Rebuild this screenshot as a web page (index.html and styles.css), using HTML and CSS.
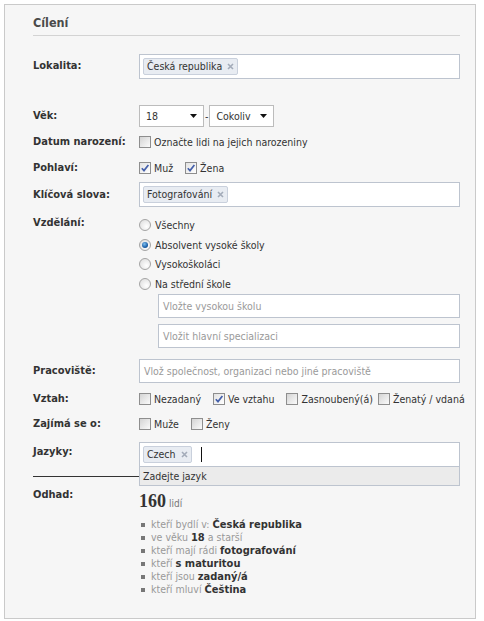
FILE: index.html
```html
<!DOCTYPE html>
<html lang="cs">
<head>
<meta charset="utf-8">
<title>Cílení</title>
<link rel="stylesheet" href="styles.css">
</head>
<body>
<div class="panel">
  <h2 class="title">Cílení</h2>

  <div class="row row-location">
    <div class="label">Lokalita:</div>
    <div class="field">
      <div class="tokenbox">
        <span class="token">Česká republika<svg class="token-x" width="7" height="7" viewBox="0 0 7 7"><path d="M1 1L6 6M6 1L1 6" stroke="#a3abb9" stroke-width="1.6"/></svg></span>
      </div>
    </div>
  </div>

  <div class="row row-age">
    <div class="label">Věk:</div>
    <div class="field age">
      <div class="select"><span>18</span><svg width="7" height="4" viewBox="0 0 7 4"><path d="M0 0H7L3.5 4Z" fill="#111"/></svg></div>
      <span class="dash">-</span>
      <div class="select"><span>Cokoliv</span><svg width="7" height="4" viewBox="0 0 7 4"><path d="M0 0H7L3.5 4Z" fill="#111"/></svg></div>
    </div>
  </div>

  <div class="row row-birthday">
    <div class="label">Datum narození:</div>
    <div class="field checks">
      <label class="check"><span class="box"></span>Označte lidi na jejich narozeniny</label>
    </div>
  </div>

  <div class="row row-gender">
    <div class="label">Pohlaví:</div>
    <div class="field checks">
      <label class="check"><span class="box is-checked"><svg width="10" height="10" viewBox="0 0 10 10"><path d="M1.8 5.2L4 7.6L8.4 2" fill="none" stroke="#4560aa" stroke-width="1.7"/></svg></span>Muž</label>
      <label class="check"><span class="box is-checked"><svg width="10" height="10" viewBox="0 0 10 10"><path d="M1.8 5.2L4 7.6L8.4 2" fill="none" stroke="#4560aa" stroke-width="1.7"/></svg></span>Žena</label>
    </div>
  </div>

  <div class="row row-keywords">
    <div class="label">Klíčová slova:</div>
    <div class="field">
      <div class="tokenbox">
        <span class="token">Fotografování<svg class="token-x" width="7" height="7" viewBox="0 0 7 7"><path d="M1 1L6 6M6 1L1 6" stroke="#a3abb9" stroke-width="1.6"/></svg></span>
      </div>
    </div>
  </div>

  <div class="row row-education">
    <div class="label">Vzdělání:</div>
    <div class="field">
      <div class="radios">
        <label class="radio"><span class="dot"></span>Všechny</label>
        <label class="radio"><span class="dot is-selected"></span>Absolvent vysoké školy</label>
        <label class="radio"><span class="dot"></span>Vysokoškoláci</label>
        <label class="radio"><span class="dot"></span>Na střední škole</label>
      </div>
      <div class="subinputs">
        <div class="input">Vložte vysokou školu</div>
        <div class="input">Vložit hlavní specializaci</div>
      </div>
    </div>
  </div>

  <div class="row row-work">
    <div class="label">Pracoviště:</div>
    <div class="field">
      <div class="input">Vlož společnost, organizaci nebo jiné pracoviště</div>
    </div>
  </div>

  <div class="row row-relation">
    <div class="label">Vztah:</div>
    <div class="field checks">
      <label class="check"><span class="box"></span>Nezadaný</label>
      <label class="check"><span class="box is-checked"><svg width="10" height="10" viewBox="0 0 10 10"><path d="M1.8 5.2L4 7.6L8.4 2" fill="none" stroke="#4560aa" stroke-width="1.7"/></svg></span>Ve vztahu</label>
      <label class="check check-tight"><span class="box"></span>Zasnoubený(á)</label>
      <label class="check"><span class="box"></span>Ženatý / vdaná</label>
    </div>
  </div>

  <div class="row row-interest">
    <div class="label">Zajímá se o:</div>
    <div class="field checks">
      <label class="check"><span class="box"></span>Muže</label>
      <label class="check"><span class="box"></span>Ženy</label>
    </div>
  </div>

  <div class="row row-languages">
    <div class="label">Jazyky:</div>
    <div class="field lang">
      <div class="tokenbox">
        <span class="token">Czech<svg class="token-x" width="7" height="7" viewBox="0 0 7 7"><path d="M1 1L6 6M6 1L1 6" stroke="#a3abb9" stroke-width="1.6"/></svg></span>
        <span class="caret"></span>
      </div>
      <div class="suggest">Zadejte jazyk</div>
    </div>
  </div>

  <div class="estimate">
    <div class="label">Odhad:</div>
    <div class="field">
      <div class="count"><span class="count-num">160</span><span class="count-unit">lidí</span></div>
      <ul class="reach">
        <li>kteří bydlí v: <b>Česká republika</b></li>
        <li>ve věku <b>18</b> a starší</li>
        <li>kteří mají rádi <b>fotografování</b></li>
        <li>kteří <b>s maturitou</b></li>
        <li>kteří jsou <b>zadaný/á</b></li>
        <li>kteří mluví <b>Čeština</b></li>
      </ul>
    </div>
  </div>
</div>
</body>
</html>
```

FILE: styles.css
```css
* { box-sizing: border-box; }

body {
  margin: 0;
  background: #fff;
  font-family: "DejaVu Sans Condensed", "DejaVu Sans", sans-serif;
  font-stretch: condensed;
  font-size: 10.5px;
  line-height: 14px;
  color: #333;
}

.panel {
  margin: 4px 0 0 4px;
  width: 472px;
  border: 1px solid #cacaca;
  background: #f6f6f6;
  padding: 10px 15px 22px 28px;
}

.title {
  margin: 0;
  font-size: 12.5px;
  font-weight: bold;
  line-height: 16px;
  color: #4a4a4a;
  padding-bottom: 4px;
  border-bottom: 1px solid #d3d3d3;
}

.row,
.estimate {
  display: grid;
  grid-template-columns: 106px minmax(0, 1fr);
  align-items: start;
}

.label {
  font-weight: bold;
  font-size: 11px;
  line-height: 14px;
  color: #333;
  white-space: nowrap;
}

.field { min-width: 0; }

/* row spacing */
.row-location { margin-top: 18px; }
.row-location .label { padding-top: 5px; }
.row-age { margin-top: 26px; }
.row-age .label { padding-top: 4px; }
.row-birthday { margin-top: 8px; }
.row-gender { margin-top: 12px; }
.row-keywords { margin-top: 7px; }
.row-keywords .label { padding-top: 6px; }
.row-education { margin-top: 9px; }
.row-work { margin-top: 11px; }
.row-work .label { padding-top: 5px; }
.row-relation { margin-top: 9px; }
.row-interest { margin-top: 11px; }
.row-languages { margin-top: 11px; }
.row-languages .label { padding-top: 3px; }

/* token inputs */
.tokenbox {
  height: 25px;
  border: 1px solid #bdc4cf;
  background: #fff;
  padding: 3px;
  display: flex;
  align-items: center;
}

.token {
  display: inline-flex;
  align-items: center;
  height: 17px;
  padding: 0 3px;
  background: #e8ecf2;
  border: 1px solid #c9d0dc;
  border-radius: 2px;
  line-height: 15px;
  color: #333;
}

.token-x { margin-left: 5px; }

.caret {
  display: inline-block;
  width: 1px;
  height: 15px;
  background: #111;
  margin-left: 9px;
}

/* selects */
.age { display: flex; align-items: center; }

.select {
  width: 65px;
  height: 22px;
  border: 1px solid #bcbcbc;
  background: #fff;
  display: flex;
  align-items: center;
  justify-content: space-between;
  padding: 0 6px;
}

.dash { margin: 0 1px; }

/* checkboxes */
.checks {
  display: flex;
  align-items: center;
  height: 14px;
  white-space: nowrap;
}

.check {
  display: flex;
  align-items: center;
  margin-right: 12px;
  flex: none;
}

.check-tight { margin-right: 5px; }

.box {
  width: 12px;
  height: 12px;
  border: 1px solid #8e8e8e;
  background: linear-gradient(135deg, #d4d4d4, #fbfbfb);
  margin-right: 3px;
  display: flex;
  align-items: center;
  justify-content: center;
  flex: none;
}

.box.is-checked { background: linear-gradient(135deg, #e2e2e2, #ffffff); }

/* radios */
.radios {
  display: flex;
  flex-direction: column;
  gap: 5.5px;
  padding-top: 2px;
}

.radio { display: flex; align-items: center; }

.dot {
  position: relative;
  width: 12px;
  height: 12px;
  border-radius: 50%;
  border: 1px solid #a4a4a4;
  background: radial-gradient(circle at 65% 65%, #ffffff, #dadada);
  margin-right: 4px;
  flex: none;
}

.dot.is-selected::after {
  content: "";
  position: absolute;
  left: 2px;
  top: 2px;
  width: 6px;
  height: 6px;
  border-radius: 50%;
  background: radial-gradient(circle at 40% 35%, #7fc0f0, #1a5fa8 60%, #0b3a75);
}

/* plain inputs */
.subinputs {
  margin: 3.5px 0 0 19px;
  display: flex;
  flex-direction: column;
  gap: 6px;
}

.input {
  height: 24px;
  border: 1px solid #bdc4cf;
  background: #fff;
  padding-left: 4px;
  color: #9a9a9a;
  display: flex;
  align-items: center;
  white-space: nowrap;
  overflow: hidden;
}

/* language suggestion */
.lang { position: relative; }

.suggest {
  position: absolute;
  left: 0;
  right: 0;
  top: 25px;
  height: 19px;
  background: #ebebeb;
  border: 1px solid #bdc4cf;
  border-top: none;
  padding-left: 3px;
  line-height: 18px;
  color: #333;
}

/* estimate */
.estimate {
  margin-top: 9px;
  border-top: 1px solid #333;
  padding-top: 11px;
}

.count {
  margin-top: 2px;
  line-height: 22px;
}

.count-num {
  font-family: "Liberation Serif", serif;
  font-weight: bold;
  font-size: 18px;
  color: #333;
}

.count-unit {
  font-size: 10px;
  color: #777;
  margin-left: 3px;
}

.reach {
  list-style: none;
  margin: 2.5px 0 0;
  padding: 0;
}

.reach li {
  line-height: 13px;
  color: #999;
  white-space: nowrap;
}

.reach li::before {
  content: "";
  display: inline-block;
  width: 4px;
  height: 4px;
  background: #777;
  margin: 0 6px 0 2px;
  vertical-align: middle;
}

.reach b {
  color: #333;
  font-size: 11px;
}
```
